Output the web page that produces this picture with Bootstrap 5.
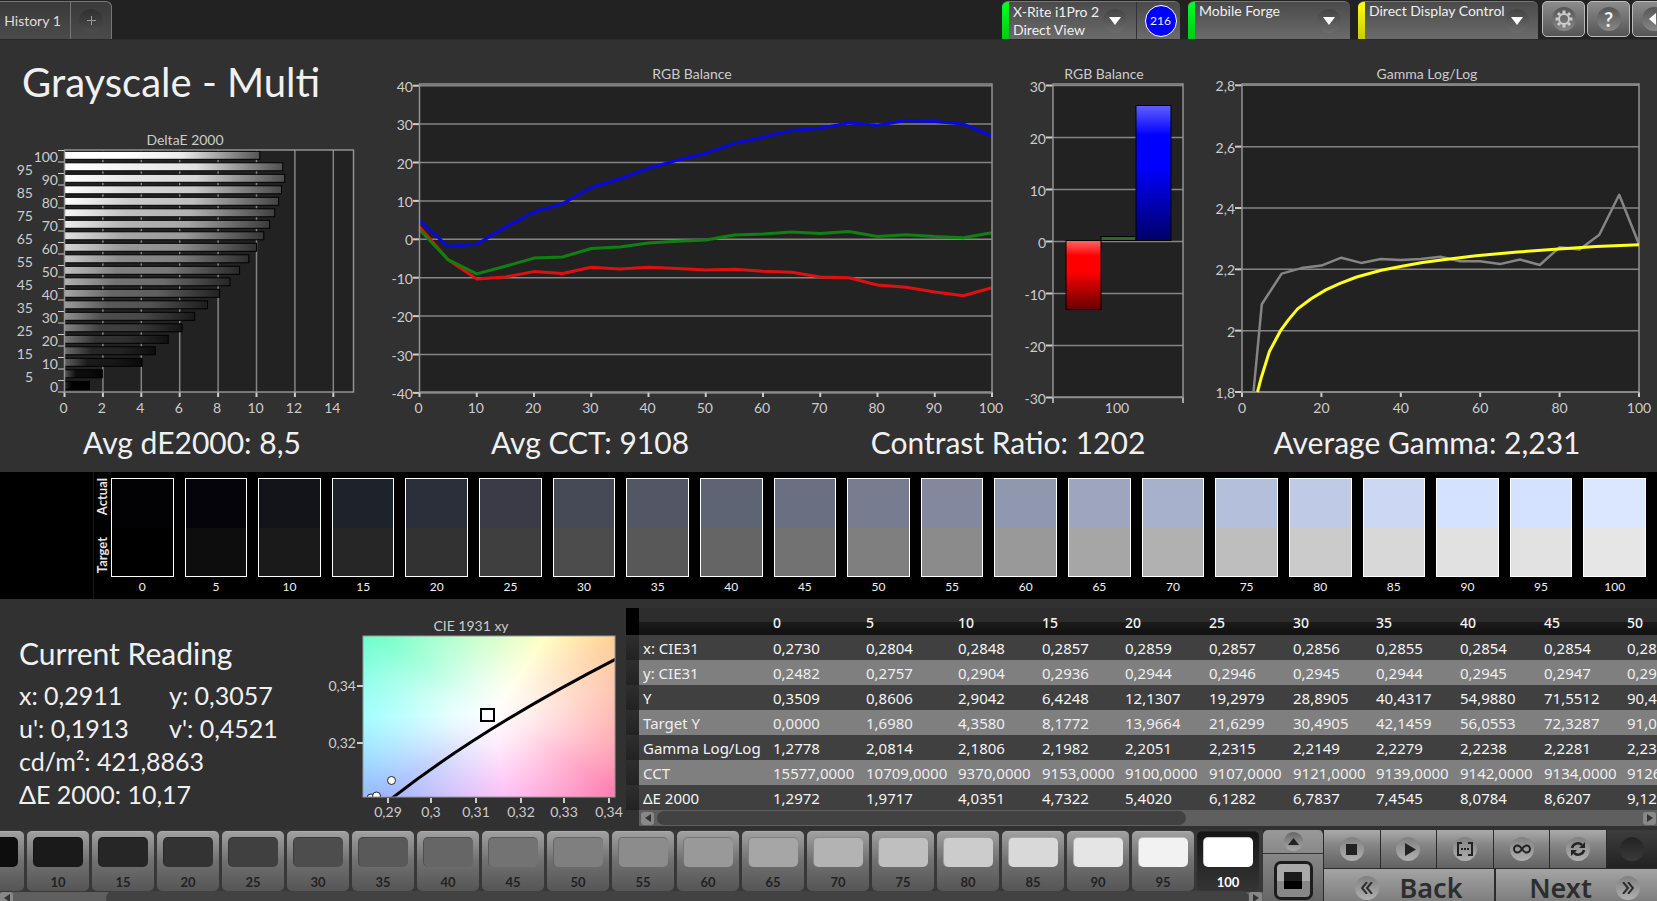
<!DOCTYPE html>
<html lang="en">
<head>
<meta charset="utf-8">
<meta name="viewport" content="width=device-width, initial-scale=1">
<title>Grayscale - Multi</title>
<link href="https://cdn.jsdelivr.net/npm/bootstrap@5.3.0/dist/css/bootstrap.min.css" rel="stylesheet">
<style>
body{background:#313131;color:#f0f0f0;font-family:Lato,"Liberation Sans",sans-serif;font-size:14px;line-height:20px}
h1,h2,p,output{margin:0;font-weight:400}
button{border:0;padding:0;color:inherit}
svg{display:block}
/* header */
.topbar{height:40px;background:#222;border-bottom:1px solid #2a2a2a}
.tab-group{height:38px;border:1px solid #777;border-left:0;border-bottom:0;border-radius:0 6px 0 0;background:linear-gradient(#3a3a3a,#4b4b4b)}
.tab-main{background:none;width:70px;padding-right:5px;color:#ddd}
.tab-add{background:none;width:41px;border-left:1px solid #777}
.round{width:24px;height:24px;border-radius:50%;background:linear-gradient(#444,#6c6c6c)}
.tab-add .round{background:linear-gradient(#303030,#4c4c4c)}
.meter{height:38px;border:0;border-top:1px solid #777;border-radius:6px 6px 0 0;background:linear-gradient(#4a4a4a,#6b6b6b);overflow:hidden;line-height:18px}
.meter .stripe{width:7px;background:linear-gradient(#0f2,#0c1)}
.meter .stripe.warn{background:linear-gradient(#ff1,#cc0)}
.meter .pick{background:none;text-align:left;padding:0 9px 0 4px}
.meter .cnt{width:44px;border-left:1px solid #333}
.count{width:32px;height:32px;border-radius:50%;background:#00f;border:1px solid #fff;font-size:12px}
.tools{width:115px;gap:2px}
.tool{width:43px;height:36px;border:1px solid #bbb;border-radius:5px;background:linear-gradient(#8c8c8c,#555)}
.tool .round{background:linear-gradient(#555,#888)}
/* charts */
.chart-grid{display:grid;grid-template-columns:384fr 636fr 200fr 437fr;align-items:end}
.chart-grid svg,.cie svg{width:100%;height:auto;overflow:visible}
h1{font-size:40px;line-height:46px;padding:19px 0 23px 22px}
.summary{display:grid;grid-template-columns:384fr 412fr 424fr 414fr 23fr;font-size:30px;line-height:40px;padding-bottom:10px;text-align:center}
svg text{fill:#ccc;font-size:14px}
/* swatches */
.band{background:#000;height:127px;padding-right:11px;font-size:12px;line-height:16px}
.band-side{width:94px;border-right:1px solid #181818}
.band-key{width:17px;padding:6px 0 26px;font-size:13px;font-weight:700;line-height:17px;color:#e6e6e6}
.band-key span{writing-mode:vertical-rl;transform:rotate(180deg)}
.swatches{display:grid;grid-template-columns:repeat(21,1fr);column-gap:11px;padding-top:6px;text-align:center}
.swatch-box{height:99px;border:1px solid #fff;margin-bottom:2px;display:flex;flex-direction:column}
.swatch-box i{flex:1}
/* readings and table */
.lower{display:grid;grid-template-columns:320fr 306fr 1031fr;height:231px}
.reading{padding:34px 0 0 19px;font-size:25px;line-height:33px}
.reading h2{font-size:30px;line-height:40px;margin-bottom:6px}
.reading dl{display:grid;grid-template-columns:150px 1fr;margin:0}
.sheet{min-width:0;overflow:hidden;padding-top:9px}
.sheet table{table-layout:fixed;width:1169px;border-collapse:collapse;font:15px/24px "Noto Sans","Open Sans",sans-serif;color:#f4f4f4}
.sheet th,.sheet td{padding:1px 0 0 4px;height:25px;font-weight:400;white-space:nowrap;text-align:left}
.sheet thead th{height:27px;padding-top:2px;background:linear-gradient(#2d2d2d 50%,#1b1b1b 52%,#101010);font-size:14px;font-weight:500}
.sheet thead th:first-child{background:#000}
.sheet tbody tr{background:#404040}
.sheet tbody tr:nth-child(even){background:#7f7f7f;color:#eee}
.sheet tbody td:first-child{background:linear-gradient(#2e2e2e,#222)}
.scroller{height:16px;background:#5f5f5f;padding:1px 1px 1px 2px}
.scroller button{width:13px;height:13px;border-radius:3px;background:#888}
.scroller .grip{height:14px;border-radius:7px;background:#424242}
.sheet .scroller{margin-left:13px}
.sheet .grip{width:529px;margin-left:3px}
/* bottom bar */
.dock{display:grid;grid-template-columns:1fr 61px 333px;height:71px;background:#2b2b2b;min-width:0}
.strip{min-width:0;overflow:hidden;padding-top:1px;background:#383838}
.levels{margin-left:-38px;gap:3px}
.level{width:62px;height:60px;border-radius:5px;background:linear-gradient(#a0a0a0,#707070 50%,#555);color:#222;font-size:13px;font-weight:700;line-height:18px;border-top:1px solid #aaa}
.level i{display:block;width:50px;height:30px;margin:5px auto 6px;border-radius:5px;border:1px solid #00000038;border-right:0;border-bottom:0}
.level.on{background:linear-gradient(#161616,#353535);color:#fff;border-color:#222}
.strip .scroller{height:12px;margin-top:1px;padding-left:0}
.strip .grip{flex:1;margin-left:93px}
.lift{border-right:1px solid #2b2b2b;background:linear-gradient(#999,#666);border-radius:5px 5px 0 0}
.lift-up{height:24px;background:none;border-bottom:1px solid #333}
.lift-up .round{width:19px;height:19px;background:linear-gradient(#666,#aaa)}
.lift-patch{width:39px;height:39px;margin:7px auto 0;border:3px solid #1d1d1d;border-radius:7px;background:linear-gradient(#aaa 50%,#888 51%)}
.lift-patch i{width:18px;height:17px;background:linear-gradient(#1c1c1c 50%,#000 51%)}
.keys{display:grid;grid-template-columns:repeat(5,1fr) 50px;gap:1px;height:38px}
.key{background:linear-gradient(#aaa,#858585 40%,#626262);color:#2b2b2b}
.key .round,.turn .round{background:linear-gradient(#808080,#b0b0b0)}
.key.off{background:linear-gradient(#3d3d3d,#222)}
.key.off .round{background:linear-gradient(#222,#3a3a3a)}
.turns{display:grid;grid-template-columns:170px 1fr;gap:2px;margin-top:1px;height:32px}
.turn{background:linear-gradient(#a4a4a4,#777);color:#2d2d2d;font:600 27px/36px "Noto Sans","Open Sans",sans-serif;height:38px}
</style>
</head>
<body class="vh-100 overflow-hidden">
<header class="topbar d-flex align-items-end justify-content-between">
  <nav class="tab-group d-flex" aria-label="History">
    <button class="tab-main" type="button">History 1</button>
    <button class="tab-add d-flex align-items-center justify-content-center" type="button" aria-label="Add history"><span class="round d-flex align-items-center justify-content-center"><svg width="9" height="9" stroke="#999"><path d="M0 4.500h9M4.500 0v9"/></svg></span></button>
  </nav>
  <div class="d-flex align-items-start overflow-hidden">
    <div class="meter d-flex me-2" style="width:178px">
      <span class="stripe"></span>
      <button class="pick flex-fill d-flex align-items-center justify-content-between text-nowrap" type="button"><span>X-Rite i1Pro 2<br>Direct View</span><span class="round d-flex align-items-center justify-content-center"><svg width="12" height="9"><path d="M0 1h12l-6 8z" fill="#fff"/></svg></span></button>
      <span class="cnt d-flex align-items-center justify-content-center ps-1"><span class="count d-flex align-items-center justify-content-center">216</span></span>
    </div>
    <div class="meter d-flex me-2" style="width:162px">
      <span class="stripe"></span>
      <button class="pick flex-fill d-flex align-items-center justify-content-between text-nowrap" type="button"><span class="align-self-start">Mobile Forge</span><span class="round d-flex align-items-center justify-content-center"><svg width="12" height="9"><path d="M0 1h12l-6 8z" fill="#fff"/></svg></span></button>
    </div>
    <div class="meter d-flex me-1" style="width:180px">
      <span class="stripe warn"></span>
      <button class="pick flex-fill d-flex align-items-center justify-content-between text-nowrap" type="button"><span class="align-self-start">Direct Display Control</span><span class="round d-flex align-items-center justify-content-center"><svg width="12" height="9"><path d="M0 1h12l-6 8z" fill="#fff"/></svg></span></button>
    </div>
    <div class="tools d-flex">
      <button class="tool flex-shrink-0 d-flex align-items-center justify-content-center" type="button" aria-label="Settings"><span class="round d-flex align-items-center justify-content-center"><svg width="18" height="18" viewBox="-9 -9 18 18" fill="none" stroke="#ccc"><circle r="5" stroke-width="2"/><g stroke-width="3"><path d="M0-8.500v3M0 5.500v3M-8.500 0h3M5.500 0h3M-6-6l2 2M4 4l2 2M-6 6l2-2M4-4l2-2"/></g></svg></span></button>
      <button class="tool flex-shrink-0 d-flex align-items-center justify-content-center fw-bold fs-5" type="button" aria-label="Help"><span class="round d-flex align-items-center justify-content-center">?</span></button>
      <button class="tool flex-shrink-0 d-flex align-items-center justify-content-center" type="button" aria-label="Collapse"><span class="round d-flex align-items-center justify-content-center"><svg width="12" height="12"><path d="M8 0v12l-7-6z" fill="#fff"/></svg></span></button>
    </div>
  </div>
</header>

<main>
  <section class="chart-grid">
    <div><h1>Grayscale - Multi</h1><svg id="delta" viewBox="0 128 384 294" role="img" aria-label="DeltaE 2000"></svg></div>
    <svg id="balance" viewBox="384 40 636 382" role="img" aria-label="RGB Balance by level"></svg>
    <svg id="bars" viewBox="1020 40 200 382" role="img" aria-label="RGB Balance"></svg>
    <svg id="gamma" viewBox="1220 40 437 382" role="img" aria-label="Gamma Log/Log"></svg>
  </section>
  <section class="summary"><p>Avg dE2000: 8,5</p><p>Avg CCT: 9108</p><p>Contrast Ratio: 1202</p><p>Average Gamma: 2,231</p></section>

  <section class="band d-flex">
    <div class="band-side flex-shrink-0"></div>
    <div class="band-key d-flex flex-column justify-content-between align-items-center"><span>Actual</span><span>Target</span></div>
    <div class="swatches flex-fill" id="swatches"></div>
  </section>

  <section class="lower">
    <div class="reading">
      <h2>Current Reading</h2>
      <dl><dd class="m-0">x: 0,2911</dd><dd class="m-0">y: 0,3057</dd><dd class="m-0">u': 0,1913</dd><dd class="m-0">v': 0,4521</dd></dl>
      <p>cd/m²: 421,8863</p><p>ΔE 2000: 10,17</p>
    </div>
    <div class="cie"><svg viewBox="320 599 306 230" role="img" aria-label="CIE 1931 xy">
      <defs><clipPath id="cieClip"><rect x="363" y="636" width="252" height="161"/></clipPath></defs>
      <text x="471" y="631" text-anchor="middle">CIE 1931 xy</text>
      <foreignObject x="363" y="636" width="252" height="161"><div style="height:161px;background:radial-gradient(ellipse 160px 115px at 52% 48%,#fff 0,#fffc 25%,#fff6 60%,#fff0 100%),conic-gradient(from 0deg at 52% 48%,#c4ffb4 0deg,#ffffae 34deg,#ffcf94 58deg,#ffa69c 90deg,#ff80b0 122deg,#ffa8f4 172deg,#9cb6ff 234deg,#8cffff 268deg,#70ffc8 304deg,#c4ffb4 360deg)"></div></foreignObject>
      <g clip-path="url(#cieClip)"><path d="M391 799Q480 729 616 659" fill="none" stroke="#000" stroke-width="3"/>
      <g fill="#fff" stroke="#222"><circle cx="391.500" cy="780.500" r="4"/><circle cx="371" cy="798" r="4"/><circle cx="376.500" cy="796" r="4"/></g></g>
      <rect x="481" y="709" width="13" height="12" fill="none" stroke="#000" stroke-width="2"/>
      <rect x="363" y="636" width="252" height="161" fill="none" stroke="#999"/>
      <g stroke="#ccc" stroke-width="2"><path d="M357 686h6M357 743h6M388 798v5M431 798v5M476 798v5M521 798v5M564 798v5M609 798v5"/></g>
      <g text-anchor="end"><text x="356" y="691">0,34</text><text x="356" y="748">0,32</text></g>
      <g text-anchor="middle"><text x="388" y="817">0,29</text><text x="431" y="817">0,3</text><text x="476" y="817">0,31</text><text x="521" y="817">0,32</text><text x="564" y="817">0,33</text><text x="609" y="817">0,34</text></g>
    </svg></div>
    <div class="sheet">
      <table>
        <colgroup><col style="width:13px"><col style="width:130px"><col style="width:93px"><col style="width:92px"><col style="width:84px"><col style="width:83px"><col style="width:84px"><col style="width:84px"><col style="width:83px"><col style="width:84px"><col style="width:84px"><col style="width:83px"><col></colgroup>
        <thead><tr id="sheetHead"></tr></thead><tbody id="sheetBody"></tbody>
      </table>
      <div class="scroller d-flex align-items-center"><button type="button" aria-label="Scroll left" class="d-flex align-items-center justify-content-center"><svg width="6" height="8"><path d="M6 0v8l-6-4z" fill="#333"/></svg></button><div class="grip"></div><button type="button" aria-label="Scroll right" class="d-flex align-items-center justify-content-center ms-auto"><svg width="6" height="8"><path d="M0 0v8l6-4z" fill="#333"/></svg></button></div>
    </div>
  </section>
</main>

<footer class="dock">
  <div class="strip"><div class="levels d-flex" id="levels"></div>
    <div class="scroller d-flex align-items-center"><button type="button" aria-label="Scroll left" class="d-flex align-items-center justify-content-center"><svg width="6" height="8"><path d="M6 0v8l-6-4z" fill="#333"/></svg></button><div class="grip"></div><button type="button" aria-label="Scroll right" class="d-flex align-items-center justify-content-center"><svg width="6" height="8"><path d="M0 0v8l6-4z" fill="#333"/></svg></button></div>
  </div>
  <div class="lift">
    <button type="button" class="lift-up w-100 d-flex align-items-center justify-content-center" aria-label="Expand"><span class="round d-flex align-items-center justify-content-center"><svg width="11" height="7"><path d="M0 7h11l-5.500-7z" fill="#222"/></svg></span></button>
    <button type="button" class="lift-patch d-flex align-items-center justify-content-center" aria-label="Patch window"><i></i></button>
  </div>
  <div>
    <div class="keys">
      <button type="button" class="key d-flex align-items-center justify-content-center" aria-label="Stop"><span class="round d-flex align-items-center justify-content-center"><svg width="11" height="11"><path d="M0 0h11v11H0z" fill="#222"/></svg></span></button>
      <button type="button" class="key d-flex align-items-center justify-content-center" aria-label="Play"><span class="round d-flex align-items-center justify-content-center ps-1"><svg width="11" height="13"><path d="M0 0v13l11-6.500z" fill="#222"/></svg></span></button>
      <button type="button" class="key d-flex align-items-center justify-content-center" aria-label="Read series"><span class="round d-flex align-items-center justify-content-center"><svg width="16" height="14" fill="none" stroke="#222" stroke-width="2"><path d="M5 1H1v12h4M11 1h4v12h-4M4 7h2M7 7h2M10 7h2"/></svg></span></button>
      <button type="button" class="key d-flex align-items-center justify-content-center" aria-label="Continuous"><span class="round d-flex align-items-center justify-content-center"><svg width="18" height="10" viewBox="0 0 18 10" fill="none" stroke="#222" stroke-width="2"><path d="M9 5C7 2 6 1.500 4.500 1.500a3.500 3.500 0 0 0 0 7C6 8.500 7 8 9 5s3-3.500 4.500-3.500a3.500 3.500 0 0 1 0 7C12 8.500 11 8 9 5z"/></svg></span></button>
      <button type="button" class="key d-flex align-items-center justify-content-center" aria-label="Refresh"><span class="round d-flex align-items-center justify-content-center"><svg width="16" height="16" viewBox="0 0 16 16" fill="none" stroke="#222" stroke-width="2.500"><path d="M2 7a6 6 0 0 1 10-3M14 9a6 6 0 0 1-10 3"/><path d="M15 1v6H9zM1 15V9h6z" fill="#222" stroke="none"/></svg></span></button>
      <button type="button" class="key off d-flex align-items-center justify-content-center" aria-label="Record" disabled><span class="round"></span></button>
    </div>
    <div class="turns">
      <button type="button" class="turn d-flex align-items-center justify-content-center gap-3"><span class="round d-flex align-items-center justify-content-center ms-2 me-1"><svg width="12" height="12" fill="none" stroke="#2d2d2d" stroke-width="2"><path d="M6 0L1 6l5 6M11 0L6 6l5 6"/></svg></span><span class="pe-2">Back</span></button>
      <button type="button" class="turn d-flex align-items-center justify-content-center gap-3"><span class="ps-3">Next</span><span class="round d-flex align-items-center justify-content-center ms-2"><svg width="12" height="12" fill="none" stroke="#2d2d2d" stroke-width="2"><path d="M1 0l5 6-5 6M6 0l5 6-5 6"/></svg></span></button>
    </div>
  </div>
</footer>

<script src="https://cdn.jsdelivr.net/npm/bootstrap@5.3.0/dist/js/bootstrap.bundle.min.js"></script>
<script>
const $ = id => document.getElementById(id);
const steps = Array.from({length: 21}, (_, i) => i * 5);
const text = (x, y, s, anchor = 'middle') => `<text x="${x}" y="${y}" text-anchor="${anchor}">${s}</text>`;
const line = (x1, y1, x2, y2, c = '#858585', w = 1.5) => `<path d="M${x1} ${y1}L${x2} ${y2}" stroke="${c}" stroke-width="${w}"/>`;
const frame = (x, y, w, h) => `<rect x="${x}" y="${y}" width="${w}" height="${h}" fill="none" stroke="#929292" stroke-width="1.5"/>`;
const fill = (x, y, w, h) => `<rect x="${x}" y="${y}" width="${w}" height="${h}" fill="#222"/>`;
const curve = (pts, c, w) => `<polyline points="${pts.map(p => p.map(n => n.toFixed(1)).join()).join(' ')}" fill="none" stroke="${c}" stroke-width="${w}" stroke-linejoin="round"/>`;
const gray = v => `rgb(${v},${v},${v})`;

// DeltaE 2000, one horizontal bar per level, 100 at the top
const de = [10.17,11.37,11.47,11.3,11.15,10.95,10.68,10.38,10,9.6,9.12,8.62,8.08,7.45,6.78,6.13,5.4,4.73,4.04,1.97,1.3];
(() => {
  let s = '<defs>', b = '';
  const X = v => 64.5 + v * 19.2;
  de.forEach((v, i) => {
    const g = Math.round((20 - i) * 12.75);
    const a = Math.min(255, g + 75 - Math.round(g * .1)), m = g, e = Math.round(g * .33);
    s += `<linearGradient id="d${i}"><stop offset="0" stop-color="${gray(i === 20 ? 40 : a)}"/><stop offset=".3" stop-color="${gray(m)}"/><stop offset=".6" stop-color="${gray(Math.round(m * .93))}"/><stop offset="1" stop-color="${gray(e)}"/></linearGradient>`;
    b += `<rect x="64.500" y="${(151.3 + i * 11.5).toFixed(1)}" width="${(v * 19.2).toFixed(1)}" height="8" fill="url(#d${i})" stroke="#000"/>`;
    const y = 162 + i * 11.5 + (i % 2 ? 1 : 0);
    b += text(i % 2 ? 33 : 58, y, 100 - i * 5, 'end');
  });
  s += '</defs>' + text(185, 145, 'DeltaE 2000') + fill(65, 150, 288, 242);
  for (let v = 0; v < 16; v += 2) {
    if (v) s += line(X(v), 150, X(v), 392);
    s += line(X(v), 392, X(v), 397, '#ccc', 2) + text(X(v) - 1, 413, v);
  }
  for (let i = 0; i <= 21; i++) s += line(58, 150.5 + i * 11.5, 65, 150.5 + i * 11.5, '#ccc', 1);
  $('delta').innerHTML = s + b + frame(64.5, 150, 289, 242);
})();

// RGB Balance over the grey scale
const rgb = {
  '#e01010': [3.2,-5.3,-10.3,-9.8,-8.4,-8.9,-7.3,-7.7,-7.3,-7.6,-8,-7.8,-8.3,-8.6,-9.8,-10,-11.9,-12.5,-13.7,-14.7,-12.6],
  '#108010': [2.5,-5.3,-9,-7,-4.9,-4.6,-2.4,-2,-1,-.5,-.2,1.1,1.4,1.9,1.5,2,.7,1.2,.7,.4,1.7],
  '#0808e0': [4.9,-1.9,-1.3,3.1,7.1,9.3,13.5,15.7,18.5,20.6,22.4,25,26.6,28.3,28.9,30.3,29.7,30.9,30.7,30,26.9]
};
(() => {
  const X = v => 419.5 + v * 5.725, Y = v => 239.3 - v * 3.84;
  let s = text(692, 79, 'RGB Balance') + fill(420, 84, 572, 308);
  for (let v = -40; v <= 40; v += 10) s += line(420, Y(v), 992, Y(v)) + line(413, Y(v), 420, Y(v), '#ccc', 2) + text(413, Y(v) + 6, v, 'end');
  for (let v = 0; v <= 100; v += 10) s += line(X(v), 392, X(v), 397, '#ccc', 2) + text(X(v) - 1, 413, v);
  for (const c in rgb) s += curve(rgb[c].map((v, i) => [X(i * 5), Y(v)]), c, 3);
  $('balance').innerHTML = s + frame(419.5, 84, 572.5, 308);
})();

// RGB Balance at the current level
(() => {
  const Y = v => 241.500 - v * 5.2;
  const g = (id, a, m, e) => `<linearGradient id="${id}" x2="0" y2="1"><stop offset="0" stop-color="${a}"/><stop offset=".22" stop-color="${m}"/><stop offset=".45" stop-color="${m}"/><stop offset="1" stop-color="${e}"/></linearGradient>`;
  let s = '<defs>' + g('gr', '#ff6868', '#f00', '#600') + g('gb', '#6060ff', '#00f', '#006') + '</defs>' + text(1104, 79, 'RGB Balance') + fill(1053, 84, 130, 313);
  for (let v = -30; v <= 30; v += 10) s += line(1053, Y(v), 1183, Y(v)) + line(1046, Y(v), 1053, Y(v), '#ccc', 2) + text(1046, Y(v) + 6, v, 'end');
  s += line(1053, 397, 1053, 403, '#ccc') + line(1183, 397, 1183, 403, '#ccc') + text(1117, 413, 100) + frame(1053, 84, 130, 313);
  s += '<g stroke="#000"><rect x="1066" y="240.500" width="35" height="69" fill="url(#gr)"/><rect x="1101" y="236.500" width="35" height="4" fill="#207020"/><rect x="1136" y="105.500" width="35" height="135" fill="url(#gb)"/></g>';
  $('bars').innerHTML = s;
})();

// Gamma Log/Log, measured (grey) and target (yellow)
(() => {
  const X = v => 1242 + v * 3.97, Y = v => 392 - (v - 1.8) * 306.7;
  const measured = [[2.9,1.8],[5,2.086],[10,2.186],[15,2.204],[20,2.212],[25,2.238],[30,2.221],[35,2.234],[40,2.23],[45,2.234],[50,2.241],[55,2.226],[60,2.226],[65,2.217],[70,2.232],[75,2.214],[80,2.272],[85,2.265],[90,2.313],[95,2.443],[100,2.282]];
  const target = [[3.9,1.8],[4.8,1.845],[6.9,1.932],[9.7,2],[11.7,2.035],[14,2.071],[17.5,2.105],[21.1,2.133],[24.7,2.154],[28.9,2.175],[35.1,2.197],[40.3,2.21],[45.5,2.222],[50.7,2.2315],[59,2.2445],[69.4,2.2565],[79.8,2.266],[89.2,2.274],[100,2.28]];
  let s = text(1427, 79, 'Gamma Log/Log') + fill(1242, 84, 397, 308);
  ['1,8','2','2,2','2,4','2,6','2,8'].forEach((t, i) => { const y = Y(1.8 + i * .2); s += line(1242, y, 1639, y) + line(1235, y, 1242, y, '#ccc', 2) + text(1235, y + 6, t, 'end'); });
  for (let v = 0; v <= 100; v += 20) s += line(X(v), 392, X(v), 397, '#ccc', 2) + text(X(v), 413, v);
  $('gamma').innerHTML = s + frame(1242, 84, 397, 308) + curve(measured.map(p => [X(p[0]), Y(p[1])]), '#858585', 2.5) + curve(target.map(p => [X(p[0]), Y(p[1])]), '#ff2', 3);
})();

// Actual and target swatches
const actual = '020205 05040a 13141a 1e222b 2b2f39 3a3b47 464a56 535665 5e6474 6a6f82 777c91 83889f 9098b0 9da5bf a8b1cc b3bfdb bfcbe6 ccd7f4 d4e1ff d5e2ff dbe7ff'.split(' ');
const target = [0,13,26,38,50,63,76,88,101,114,127,139,153,166,177,190,203,216,225,226,230];
$('swatches').innerHTML = steps.map((v, i) => `<div><div class="swatch-box"><i style="background:#${actual[i]}"></i><i style="background:${gray(target[i])}"></i></div>${v}</div>`).join('');

// Level buttons
$('levels').innerHTML = steps.slice(1).map(v => `<button type="button" class="level flex-shrink-0${v === 100 ? ' on' : ''}"${v === 5 ? ' aria-label="5"' : ''}><i style="background:${gray(Math.round(v * 2.55))}"></i>${v === 5 ? '&nbsp;' : v}</button>`).join('');

// Readings table
const rows = [
  ['x: CIE31','0,2730','0,2804','0,2848','0,2857','0,2859','0,2857','0,2856','0,2855','0,2854','0,2854','0,2854'],
  ['y: CIE31','0,2482','0,2757','0,2904','0,2936','0,2944','0,2946','0,2945','0,2944','0,2945','0,2947','0,2948'],
  ['Y','0,3509','0,8606','2,9042','6,4248','12,1307','19,2979','28,8905','40,4317','54,9880','71,5512','90,4120'],
  ['Target Y','0,0000','1,6980','4,3580','8,1772','13,9664','21,6299','30,4905','42,1459','56,0553','72,3287','91,0340'],
  ['Gamma Log/Log','1,2778','2,0814','2,1806','2,1982','2,2051','2,2315','2,2149','2,2279','2,2238','2,2281','2,2340'],
  ['CCT','15577,0000','10709,0000','9370,0000','9153,0000','9100,0000','9107,0000','9121,0000','9139,0000','9142,0000','9134,0000','9126,0000'],
  ['ΔE 2000','1,2972','1,9717','4,0351','4,7322','5,4020','6,1282','6,7837','7,4545','8,0784','8,6207','9,1200']
];
$('sheetHead').innerHTML = '<th></th><th></th>' + steps.slice(0, 11).map(v => `<th scope="col">${v}</th>`).join('');
$('sheetBody').innerHTML = rows.map(r => `<tr><td></td><th scope="row">${r[0]}</th>${r.slice(1).map(c => `<td>${c}</td>`).join('')}</tr>`).join('');
</script>
</body>
</html>
